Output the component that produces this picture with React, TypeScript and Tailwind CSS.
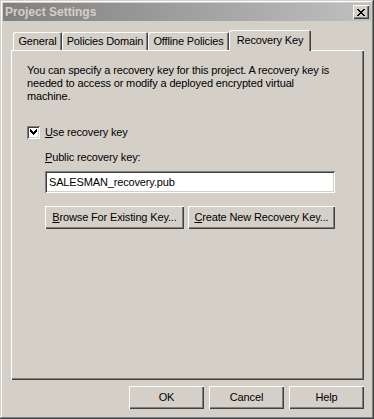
import React from 'react';

const raised =
  'shadow-[inset_1px_1px_#ffffff,inset_-1px_-1px_#404040,inset_-2px_-2px_#808080]';
const sunken =
  'shadow-[inset_1px_1px_#808080,inset_-1px_-1px_#ffffff,inset_2px_2px_#404040,inset_-2px_-2px_#d4d0c8]';

function Button({ label, hot, className }: { label: string; hot?: number; className: string }) {
  const idx = hot ?? -1;
  return (
    <button
      type="button"
      className={`flex h-[23px] items-center justify-center bg-[#d4d0c8] text-[11px] leading-[13px] text-black ${raised} ${className}`}
    >
      {idx >= 0 ? (
        <span>
          {label.slice(0, idx)}
          <span className="underline underline-offset-1">{label[idx]}</span>
          {label.slice(idx + 1)}
        </span>
      ) : (
        label
      )}
    </button>
  );
}

function Tab({ label, width, active }: { label: string; width: string; active?: boolean }) {
  return (
    <div
      className={`flex items-start justify-center rounded-t-[2px] bg-[#d4d0c8] text-[11px] leading-[13px] shadow-[inset_1px_1px_#ffffff,inset_-1px_0_#404040,inset_-2px_0_#808080] ${width} ${
        active ? 'relative z-10 -mb-px h-[21px] pt-[4px]' : 'h-[18px] pt-[3px]'
      }`}
    >
      {label}
    </div>
  );
}

export default function App() {
  return (
    <div
      className="flex h-[419px] w-[374px] flex-col bg-[#d4d0c8] tracking-[-0.15px] text-black shadow-[inset_-1px_-1px_#404040,inset_1px_1px_#d4d0c8,inset_-2px_-2px_#808080,inset_2px_2px_#ffffff]"
      style={{ fontFamily: '"Liberation Sans", Arial, sans-serif' }}
    >
      {/* title bar */}
      <div className="mx-[3px] mt-[3px] flex h-[18px] items-center justify-between bg-linear-to-r from-[#808080] to-[#c0c0c0] pl-[2px] pr-[2px]">
        <span className="text-[12px] font-bold leading-[14px] tracking-normal text-[#d4d0c8]">Project Settings</span>
        <button
          type="button"
          className={`flex h-[14px] w-[16px] items-center justify-center bg-[#d4d0c8] ${raised}`}
        >
          <svg width="8" height="7" viewBox="0 0 8 7" shapeRendering="crispEdges">
            <path
              d="M0 0h2v1H0zM6 0h2v1H6zM1 1h2v1H1zM5 1h2v1H5zM2 2h4v1H2zM3 3h2v1H3zM2 4h4v1H2zM1 5h2v1H1zM5 5h2v1H5zM0 6h2v1H0zM6 6h2v1H6z"
              fill="#000"
            />
          </svg>
        </button>
      </div>

      {/* tabs */}
      <div className="flex h-[29px] items-end pl-[13px]">
        <Tab label="General" width="w-[49px]" />
        <Tab label="Policies Domain" width="w-[86px]" />
        <Tab label="Offline Policies" width="w-[81px]" />
        <Tab label="Recovery Key" width="w-[82px]" active />
      </div>

      {/* tab page */}
      <div className="ml-[11px] flex h-[330px] w-[353px] flex-col bg-[#d4d0c8] pl-[16px] pt-[14px] text-[11px] leading-[13px] shadow-[inset_1px_1px_#ffffff,inset_-1px_-1px_#404040,inset_-2px_-2px_#808080]">
        <p>
          You can specify a recovery key for this project. A recovery key is
          <br />
          needed to access or modify a deployed encrypted virtual
          <br />
          machine.
        </p>

        <label className="mt-[23px] flex items-center gap-[5px]">
          <span className={`flex h-[13px] w-[13px] items-center justify-center bg-white ${sunken}`}>
            <svg width="7" height="7" viewBox="0 0 7 7" shapeRendering="crispEdges">
              <path d="M6 0h1v3H6zM5 1h1v3H5zM4 2h1v3H4zM3 3h1v3H3zM2 2h1v3H2zM1 1h1v3H1zM0 0h1v3H0z" fill="#000" />
            </svg>
          </span>
          <span>
            <span className="underline underline-offset-1">U</span>se recovery key
          </span>
        </label>

        <div className="ml-[18px] mt-[12px] flex flex-col">
          <span>
            <span className="underline underline-offset-1">P</span>ublic recovery key:
          </span>
          <div className={`mt-[7px] flex h-[22px] w-[290px] items-center bg-white pl-[4px] ${sunken}`}>
            SALESMAN_recovery.pub
          </div>
          <div className="mt-[13px] flex gap-[4px]">
            <Button label="Browse For Existing Key..." hot={0} className="w-[139px]" />
            <Button label="Create New Recovery Key..." hot={0} className="w-[147px]" />
          </div>
        </div>
      </div>

      {/* dialog buttons */}
      <div className="mt-[6px] flex justify-end gap-[5px] pr-[10px]">
        <Button label="OK" className="w-[75px]" />
        <Button label="Cancel" className="w-[75px]" />
        <Button label="Help" className="w-[75px]" />
      </div>
    </div>
  );
}
